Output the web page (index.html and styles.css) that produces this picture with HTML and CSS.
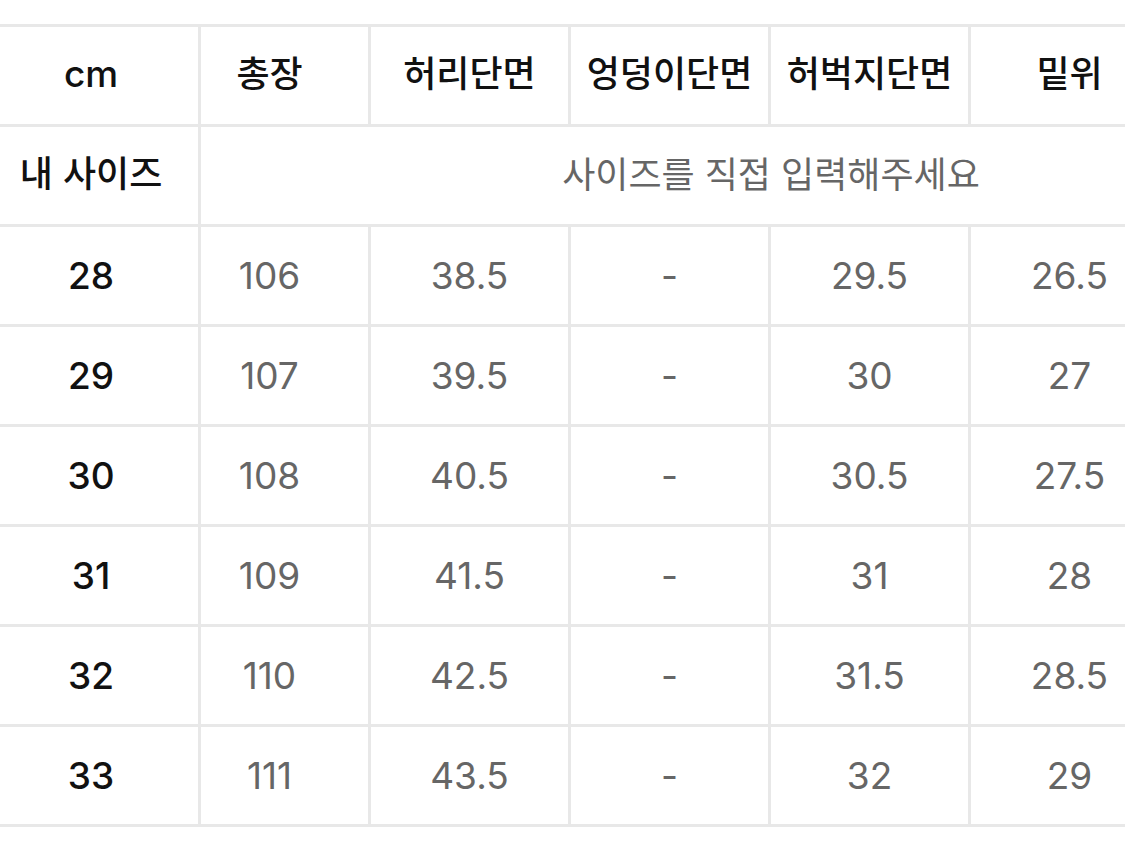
FILE: index.html
```html
<!DOCTYPE html>
<html lang="ko">
<head>
<meta charset="utf-8">
<title>사이즈표</title>
<link rel="stylesheet" href="styles.css">
</head>
<body>
<div class="size-table">
  <div class="fixed-col">
    <div class="cell head unit">cm</div>
    <div class="cell head ko">내 사이즈</div>
    <div class="cell head num">28</div>
    <div class="cell head num">29</div>
    <div class="cell head num">30</div>
    <div class="cell head num">31</div>
    <div class="cell head num">32</div>
    <div class="cell head num">33</div>
  </div>
  <div class="scroll-area">
    <div class="grid">
      <div class="cell head ko">총장</div>
      <div class="cell head ko">허리단면</div>
      <div class="cell head ko">엉덩이단면</div>
      <div class="cell head ko">허벅지단면</div>
      <div class="cell head ko">밑위</div>
      <div class="cell head ko"></div>

      <div class="cell span placeholder">사이즈를 직접 입력해주세요</div>

      <div class="cell val">106</div><div class="cell val">38.5</div><div class="cell val">-</div><div class="cell val">29.5</div><div class="cell val">26.5</div><div class="cell val"></div>
      <div class="cell val">107</div><div class="cell val">39.5</div><div class="cell val">-</div><div class="cell val">30</div><div class="cell val">27</div><div class="cell val"></div>
      <div class="cell val">108</div><div class="cell val">40.5</div><div class="cell val">-</div><div class="cell val">30.5</div><div class="cell val">27.5</div><div class="cell val"></div>
      <div class="cell val">109</div><div class="cell val">41.5</div><div class="cell val">-</div><div class="cell val">31</div><div class="cell val">28</div><div class="cell val"></div>
      <div class="cell val">110</div><div class="cell val">42.5</div><div class="cell val">-</div><div class="cell val">31.5</div><div class="cell val">28.5</div><div class="cell val"></div>
      <div class="cell val">111</div><div class="cell val">43.5</div><div class="cell val">-</div><div class="cell val">32</div><div class="cell val">29</div><div class="cell val"></div>
    </div>
  </div>
</div>
</body>
</html>
```

FILE: styles.css
```css
html, body {
  margin: 0;
  padding: 0;
  background: #ffffff;
}

body {
  font-family: Inter, "Noto Sans CJK KR", sans-serif;
  overflow: hidden;
}

.size-table {
  display: flex;
  margin-top: 24px;
  border-top: 3px solid #e8e8e8;
  width: 100%;
}

.fixed-col {
  flex: 0 0 201px;
  display: flex;
  flex-direction: column;
  border-right: 3px solid #e8e8e8;
  box-sizing: border-box;
}

.fixed-col .cell {
  width: 100%;
  border-right: none;
  padding-right: 16px;
}

.scroll-area {
  flex: 1 1 auto;
  overflow: hidden;
}

.grid {
  display: grid;
  grid-template-columns: repeat(6, 200px);
  grid-auto-rows: 100px;
  margin-left: -30px;
  width: 1200px;
}

.cell {
  box-sizing: border-box;
  height: 100px;
  display: flex;
  align-items: center;
  justify-content: center;
  border-right: 3px solid #e8e8e8;
  border-bottom: 3px solid #e8e8e8;
  white-space: nowrap;
}

.head {
  color: #111111;
  font-weight: 500;
}

.ko {
  font-family: "Noto Sans CJK KR", Inter, sans-serif;
  font-size: 36px;
  padding-bottom: 10px;
}

.unit {
  font-family: Inter, "Noto Sans CJK KR", sans-serif;
  font-size: 37px;
  padding-bottom: 4px;
}

.num {
  font-size: 37px;
}

.val {
  font-size: 37px;
  color: #666666;
  font-weight: 400;
}

.span {
  grid-column: 1 / -1;
  border-right: none;
}

.placeholder {
  font-family: "Noto Sans CJK KR", Inter, sans-serif;
  font-size: 36px;
  color: #666666;
  font-weight: 400;
  padding-bottom: 8px;
}
```
